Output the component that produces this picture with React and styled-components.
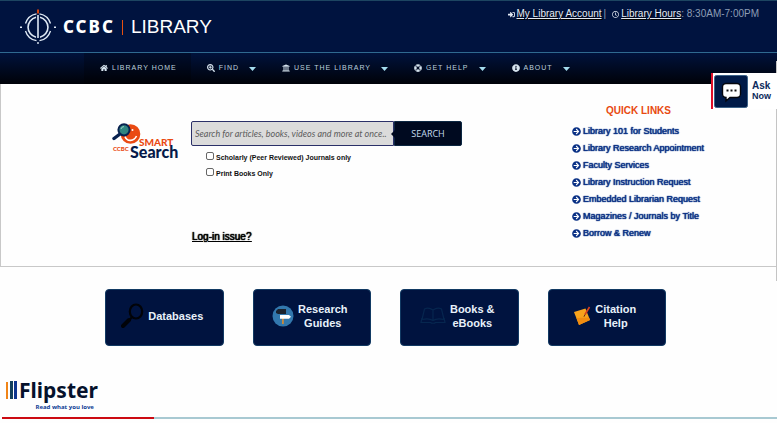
import React from 'react';
import styled, { createGlobalStyle } from 'styled-components';
import {
  FaHome,
  FaSearchPlus,
  FaUniversity,
  FaLifeRing,
  FaInfoCircle,
  FaSignInAlt,
  FaRegClock,
  FaArrowCircleRight,
} from 'react-icons/fa';

const GlobalStyle = createGlobalStyle`
  * {
    box-sizing: border-box;
  }
  body {
    margin: 0;
    background: #fefefe;
    font-family: 'Liberation Sans', Arial, sans-serif;
  }
`;

const Page = styled.div`
  position: relative;
`;

/* ---------- header ---------- */

const Header = styled.header`
  display: flex;
  justify-content: space-between;
  align-items: flex-start;
  height: 53px;
  padding: 7px 18px 0 19px;
  background: #00133f;
  border-top: 1px solid #1d4561;
  border-bottom: 1px solid #2f6a90;
`;

const Brand = styled.a`
  display: flex;
  align-items: center;
  color: #ffffff;
  text-decoration: none;
`;

const BrandName = styled.span`
  margin-left: 6px;
  font-family: 'Noto Sans', sans-serif;
  font-size: 17px;
  font-weight: 800;
  line-height: 36px;
  letter-spacing: 2px;
`;

const BrandDivider = styled.span`
  flex: none;
  width: 1px;
  height: 15px;
  margin: 0 8px 0 7px;
  background: #e8500f;
`;

const BrandSection = styled.span`
  font-size: 19px;
  line-height: 38px;
`;

const Account = styled.div`
  display: flex;
  align-items: center;
  gap: 2px;
  color: #8d9db5;
  font-size: 10px;
  line-height: 12px;
`;

const AccountLink = styled.a`
  color: #e4ebf4;
  text-shadow: 1px 1px 1px #000000;
`;

const AccountIcon = styled.span`
  display: flex;
  margin-left: ${({ $gap }) => $gap || '0'};
  color: #e4ebf4;
  font-size: 7px;
`;

/* ---------- navigation ---------- */

const Nav = styled.nav`
  display: flex;
  height: 31px;
  padding-left: 84px;
  background: linear-gradient(#00123c, #000208);
`;

const NavItem = styled.a`
  display: flex;
  align-items: center;
  padding: 0 ${({ $active }) => ($active ? '14px' : '10px')} 2px 16px;
  background: ${({ $active }) => ($active ? 'rgba(0, 0, 0, 0.25)' : 'none')};
  color: #bcd0de;
  font-size: 7px;
  letter-spacing: 1px;
  text-decoration: none;
  white-space: nowrap;
`;

const NavIcon = styled.span`
  display: flex;
  margin-right: 4px;
  color: #d5e3ee;
  font-size: 8px;
`;

const CaretSlot = styled.span`
  display: flex;
  margin: 2px 0 0 10px;
`;

/* ---------- search panel ---------- */

const Panel = styled.main`
  display: flex;
  justify-content: space-between;
  min-height: 183px;
  border-bottom: 1px solid #c8c8c8;
  border-left: 1px solid #c8c8c8;
`;

const SearchArea = styled.section`
  display: flex;
  gap: 8px;
  padding: 37px 0 0 111px;
`;

const SearchForm = styled.form`
  display: flex;
  flex-direction: column;
  width: 271px;
`;

const SearchBar = styled.div`
  display: flex;
  height: 25px;
  margin-bottom: 3px;
`;

const SearchInput = styled.input`
  flex: 1;
  min-width: 0;
  padding: 0 3px;
  border: 1px solid #2b3068;
  border-radius: 2px 0 0 2px;
  background: #dbdbdb;
  color: #555555;
  font: italic 9px Lato, sans-serif;

  &::placeholder {
    color: #5c5c5c;
    opacity: 1;
  }
`;

const SearchButton = styled.button`
  position: relative;
  width: 68px;
  border: 1px solid #0c2742;
  border-radius: 0 2px 2px 0;
  background: #000a20;
  color: #c4dcee;
  font: 9px 'Open Sans', sans-serif;

  &::before {
    content: '';
    position: absolute;
    left: -4px;
    top: 8px;
    border: 4px solid transparent;
    border-left: 0;
    border-right-color: #000a20;
  }
`;

const CheckLabel = styled.label`
  display: flex;
  align-items: center;
  gap: 2px;
  height: 16px;
  margin-left: 15px;
  color: #111111;
  font-size: 7px;
  font-weight: bold;
`;

const CheckBox = styled.input`
  appearance: none;
  width: 8px;
  height: 8px;
  margin: 0 0 2px;
  border: 1px solid #666666;
  border-radius: 2px;
  background: #ffffff;

  &:checked {
    background: #00133f;
  }
`;

const LoginLink = styled.a`
  align-self: flex-start;
  margin: 50px 0 0 1px;
  color: #000000;
  font-size: 10px;
  line-height: 12px;
  text-shadow: 0 0 1px #000000, 0 0 1px #000000;
`;

const QuickLinks = styled.aside`
  width: 205px;
  padding-top: 20px;
`;

const QuickTitle = styled.h2`
  margin: 0 0 5px 34px;
  color: #e84a10;
  font-size: 10px;
  line-height: 14px;
`;

const QuickList = styled.ul`
  margin: 0;
  padding: 0;
  list-style: none;
`;

const QuickLink = styled.a`
  display: flex;
  align-items: center;
  gap: 2px;
  color: #0a3185;
  font-size: 9px;
  line-height: 17px;
  text-decoration: none;
  text-shadow: 0 0 1px #0a3185, 0 0 1px #0a3185;
`;

/* ---------- tiles ---------- */

const Tiles = styled.section`
  display: grid;
  grid-template-columns: repeat(4, 1fr);
  gap: 29px;
  max-width: 561px;
  margin: 22px 0 0 105px;
`;

const Tile = styled.a`
  display: flex;
  align-items: center;
  justify-content: center;
  gap: 4px;
  height: 57px;
  padding: 0 4px 4px 0;
  border: 1px solid #123a63;
  border-radius: 4px;
  background: #00133f;
  color: #e8f1fa;
  font-size: 11px;
  font-weight: bold;
  line-height: 14px;
  text-align: center;
  text-decoration: none;
  white-space: pre-line;
`;

/* ---------- flipster ---------- */

const Flipster = styled.section`
  margin-top: 33px;
`;

const FlipsterLogo = styled.a`
  display: inline-grid;
  grid-template-columns: 12px auto;
  column-gap: 1px;
  margin-left: 6px;
  color: #06122c;
  text-decoration: none;
`;

const FlipsterName = styled.span`
  font: bold 21px/22px 'Noto Sans', sans-serif;
`;

const FlipsterTag = styled.span`
  grid-column: 2;
  justify-self: end;
  margin-right: 4px;
  color: #0c3a94;
  font: bold 6px/12px 'Open Sans', sans-serif;
`;

const FlipsterBar = styled.div`
  height: 2px;
  margin: 4px 0 3px 2px;
  background: linear-gradient(to right, #cc0a12 152px, #a8c9d2 152px);
`;

/* ---------- overlays ---------- */

const AskNow = styled.button`
  position: absolute;
  top: 73px;
  right: 0;
  display: flex;
  align-items: center;
  gap: 4px;
  width: 66px;
  height: 36px;
  padding: 0 0 0 1px;
  border: 0;
  border-left: 2px solid #e0102a;
  background: #ffffff;
  color: #0c2a5c;
  font: bold 10px/11px 'Liberation Sans', Arial, sans-serif;
  text-align: left;
`;

const AskSmall = styled.span`
  display: block;
  font-size: 9px;
`;

const ScrollThumb = styled.div`
  position: absolute;
  top: 61px;
  right: 0;
  width: 1px;
  height: 220px;
  background: #c4c4c4;
`;

const Caret = () => (
  <CaretSlot>
    <svg width="7" height="4" viewBox="0 0 7 4">
      <path d="M0 0h7L3.500 4z" fill="#a5dcee" />
    </svg>
  </CaretSlot>
);

const CompassLogo = () => (
  <svg width="38" height="36" viewBox="0 0 38 36" fill="none" stroke="#dfeaf5">
    <path d="M17.5 4.8a14 14 0 0 0-11 9.7M6.5 22a14 14 0 0 0 11 9.7M20.5 4.8a14 14 0 0 1 11 9.7M31.5 22a14 14 0 0 1-11 9.7" strokeWidth="1.3" />
    <path d="M17 8.3a10.2 10.2 0 0 0 0 19.9M21 8.3a10.2 10.2 0 0 1 0 19.9" strokeWidth="1.6" />
    <path d="M19 6v23" strokeWidth="1.6" />
    <path d="M1 18.3h2M35 18.3h2M19 33v2" strokeWidth="1.4" />
    <path d="M19 .5v4" stroke="#d6430f" strokeWidth="2" />
  </svg>
);

const SmartSearchLogo = () => (
  <svg width="71" height="42" viewBox="0 0 71 42" role="img" aria-label="CCBC Smart Search">
    <circle cx="18.5" cy="13" r="9.8" fill="#ea4a12" />
    <path d="M13 15.5c2 5.5 9 5 11.500-.5" fill="none" stroke="#fff" strokeWidth="1.6" />
    <circle cx="20.5" cy="9" r="1" fill="#fff" />
    <path d="M8 13l-6 4.5" stroke="#08214f" strokeWidth="3.4" strokeLinecap="round" />
    <circle cx="12" cy="8.8" r="5.6" fill="#2f8580" stroke="#08214f" strokeWidth="2" />
    <path d="M9 8a3 3 0 0 1 3-2.4" fill="none" stroke="#9fd0c6" />
    <g fontFamily="Lato, sans-serif" fontWeight="900">
      <text x="27" y="25" fontSize="10" fill="#ea4a12">SMART</text>
      <text x="1" y="30" fontSize="6" fill="#ea4a12">CCBC</text>
      <text x="18" y="37" fontSize="16" fill="#061a4a">Search</text>
    </g>
  </svg>
);

const MagnifierIcon = () => (
  <svg width="23" height="25" viewBox="0 0 23 25" fill="none" stroke="#010308">
    <ellipse cx="15" cy="8.5" rx="6.2" ry="7" strokeWidth="2.2" />
    <path d="M11 14l-3 3.5" strokeWidth="2" />
    <path d="M8 17l-6 6" strokeWidth="4" strokeLinecap="round" />
  </svg>
);

const SignpostIcon = () => (
  <svg width="22" height="22" viewBox="0 0 22 22">
    <circle cx="11" cy="11" r="10.5" fill="#3278ae" />
    <path d="M10 10h1.8v9H10z" fill="#c98a3c" />
    <path d="M4 6l2-2h8v5H6L4 8z" fill="#1a222e" />
    <path d="M8 10h9l2 1.8-2 2H8z" fill="#fff" />
  </svg>
);

const BookIcon = () => (
  <svg width="26" height="18" viewBox="0 0 26 18" fill="none" stroke="#06264f" strokeWidth="1.2">
    <path d="M13 3C10 .8 6.500.8 4.500 2L2 12.500c4-1 8-1 11 1 3-2 7-2 11-1L21.500 2C19.500.8 16 .8 13 3zM13 3v10.500" />
    <path d="M2 11l-1 4.500h9.500c1 1 4 1 5 0H25L24 11" />
  </svg>
);

const NoteIcon = () => (
  <svg width="18" height="20" viewBox="0 0 18 20">
    <path d="M1 6l11.500-3.500L17 14 6 19z" fill="#f8a31c" />
    <path d="M3.500 12l2.500 7 11-5-1-2.500z" fill="#f08c10" />
    <path d="M16.500 1L12 8.500" stroke="#d8401c" strokeWidth="1.6" />
    <path d="M12 8.500l-1 2.200" stroke="#5c2a1a" />
  </svg>
);

const ChatIcon = () => (
  <svg width="34" height="33" viewBox="0 0 34 33">
    <rect x=".5" y=".5" width="33" height="32" rx="2" fill="#001a48" stroke="#3c6288" />
    <path
      d="M12 8.500h11a3.500 3.500 0 0 1 3.500 3.500v7a3.500 3.500 0 0 1-3.500 3.500h-7L12 26v-3.500a3.500 3.500 0 0 1-3.500-3.500v-7A3.500 3.500 0 0 1 12 8.500z"
      fill="#fff"
      stroke="#05070d"
      strokeWidth="1.4"
    />
    <path d="M12.500 15.500h2M16.500 15.500h2M20.500 15.500h2" stroke="#111" strokeWidth="2" />
  </svg>
);

const FlipsterBars = () => (
  <svg width="12" height="22" viewBox="0 0 12 22">
    <path d="M0 3h2v17H0z" fill="#f08418" />
    <path d="M4 2h3v18H4z" fill="#123f5c" />
    <path d="M8 2h3v18H8z" fill="#0e3590" />
  </svg>
);

const menuItems = [
  { label: 'LIBRARY HOME', icon: <FaHome />, active: true },
  { label: 'FIND', icon: <FaSearchPlus />, menu: true },
  { label: 'USE THE LIBRARY', icon: <FaUniversity />, menu: true },
  { label: 'GET HELP', icon: <FaLifeRing />, menu: true },
  { label: 'ABOUT', icon: <FaInfoCircle />, menu: true },
];

const quickLinks = [
  'Library 101 for Students',
  'Library Research Appointment',
  'Faculty Services',
  'Library Instruction Request',
  'Embedded Librarian Request',
  'Magazines / Journals by Title',
  'Borrow & Renew',
];

const tiles = [
  { label: 'Databases', icon: <MagnifierIcon /> },
  { label: 'Research\nGuides', icon: <SignpostIcon /> },
  { label: 'Books &\neBooks', icon: <BookIcon /> },
  { label: 'Citation\nHelp', icon: <NoteIcon /> },
];

const App = () => {
  return (
    <Page>
      <GlobalStyle />
      <Header>
        <Brand href="#">
          <CompassLogo />
          <BrandName>CCBC</BrandName>
          <BrandDivider />
          <BrandSection>LIBRARY</BrandSection>
        </Brand>
        <Account>
          <AccountIcon><FaSignInAlt /></AccountIcon>
          <AccountLink href="#">My Library Account</AccountLink>
          <span>|</span>
          <AccountIcon $gap="4px"><FaRegClock /></AccountIcon>
          <span>
            <AccountLink href="#">Library Hours</AccountLink>: 8:30AM-7:00PM
          </span>
        </Account>
      </Header>

      <Nav>
        {menuItems.map((item) => (
          <NavItem key={item.label} href="#" $active={item.active}>
            <NavIcon>{item.icon}</NavIcon>
            {item.label}
            {item.menu && <Caret />}
          </NavItem>
        ))}
      </Nav>

      <Panel>
        <SearchArea>
          <SmartSearchLogo />
          <SearchForm onSubmit={(e) => e.preventDefault()}>
            <SearchBar>
              <SearchInput
                type="text"
                aria-label="Search"
                placeholder="Search for articles, books, videos and more at once.."
              />
              <SearchButton type="submit">SEARCH</SearchButton>
            </SearchBar>
            <CheckLabel>
              <CheckBox type="checkbox" />
              Scholarly (Peer Reviewed) Journals only
            </CheckLabel>
            <CheckLabel>
              <CheckBox type="checkbox" />
              Print Books Only
            </CheckLabel>
            <LoginLink href="#">Log-in issue?</LoginLink>
          </SearchForm>
        </SearchArea>
        <QuickLinks>
          <QuickTitle>QUICK LINKS</QuickTitle>
          <QuickList>
            {quickLinks.map((link) => (
              <li key={link}>
                <QuickLink href="#">
                  <FaArrowCircleRight />
                  {link}
                </QuickLink>
              </li>
            ))}
          </QuickList>
        </QuickLinks>
      </Panel>

      <Tiles>
        {tiles.map((tile) => (
          <Tile key={tile.label} href="#">
            {tile.icon}
            <span>{tile.label}</span>
          </Tile>
        ))}
      </Tiles>

      <Flipster>
        <FlipsterLogo href="#">
          <FlipsterBars />
          <FlipsterName>Flipster</FlipsterName>
          <FlipsterTag>Read what you love</FlipsterTag>
        </FlipsterLogo>
        <FlipsterBar />
      </Flipster>

      <ScrollThumb />
      <AskNow type="button">
        <ChatIcon />
        <span>
          Ask
          <AskSmall>Now</AskSmall>
        </span>
      </AskNow>
    </Page>
  );
};

export default App;
